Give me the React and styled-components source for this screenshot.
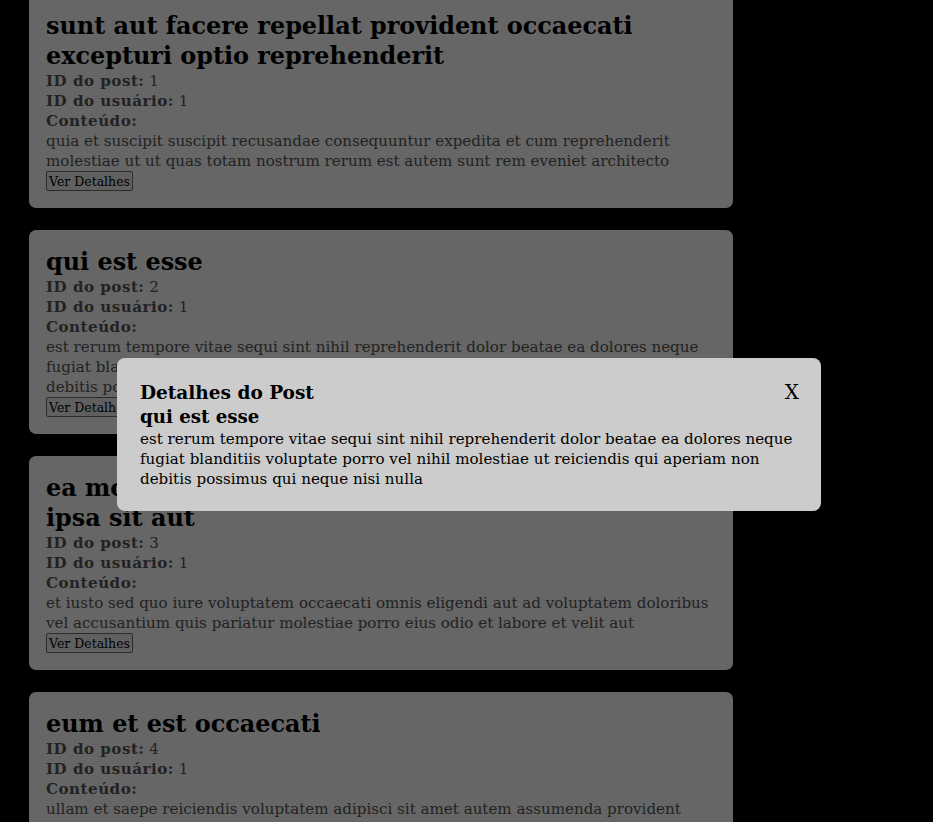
import styled, { createGlobalStyle } from "styled-components";
import { useState } from "react";

const posts = [
  {
    id: 1,
    userId: 1,
    title: "sunt aut facere repellat provident occaecati excepturi optio reprehenderit",
    body: "quia et suscipit suscipit recusandae consequuntur expedita et cum reprehenderit molestiae ut ut quas totam nostrum rerum est autem sunt rem eveniet architecto",
  },
  {
    id: 2,
    userId: 1,
    title: "qui est esse",
    body: "est rerum tempore vitae sequi sint nihil reprehenderit dolor beatae ea dolores neque fugiat blanditiis voluptate porro vel nihil molestiae ut reiciendis qui aperiam non debitis possimus qui neque nisi nulla",
  },
  {
    id: 3,
    userId: 1,
    title: "ea molestias quasi exercitationem repellat qui ipsa sit aut",
    body: "et iusto sed quo iure voluptatem occaecati omnis eligendi aut ad voluptatem doloribus vel accusantium quis pariatur molestiae porro eius odio et labore et velit aut",
  },
  {
    id: 4,
    userId: 1,
    title: "eum et est occaecati",
    body: "ullam et saepe reiciendis voluptatem adipisci sit amet autem assumenda provident rerum culpa quis hic commodi nesciunt rem tenetur doloremque ipsam iure quis sunt voluptatem rerum illo velit",
  },
];

const App = () => {
  const [selected, setSelected] = useState(posts[1]);

  return (
    <>
      <GlobalStyle />
      <Page>
        <List>
          {posts.map((post) => (
            <Card key={post.id}>
              <Title>{post.title}</Title>
              <Line>
                <Label>ID do post:</Label> {post.id}
              </Line>
              <Line>
                <Label>ID do usuário:</Label> {post.userId}
              </Line>
              <Line>
                <Label>Conteúdo:</Label>
              </Line>
              <Line>{post.body}</Line>
              <Button onClick={() => setSelected(post)}>Ver Detalhes</Button>
            </Card>
          ))}
        </List>
      </Page>
      {selected && (
        <Modal>
          <ModalHeader>
            <ModalTitle>Detalhes do Post</ModalTitle>
            <Close onClick={() => setSelected(null)}>X</Close>
          </ModalHeader>
          <ModalSubtitle>{selected.title}</ModalSubtitle>
          <ModalText>{selected.body}</ModalText>
        </Modal>
      )}
    </>
  );
};

const GlobalStyle = createGlobalStyle`
  body {
    margin: 0;
    background: #000;
    font-family: "DejaVu Serif", serif;
    overflow: hidden;
  }
`;

const Page = styled.div`
  padding-left: 29px;
`;

const List = styled.div`
  display: flex;
  flex-direction: column;
  gap: 22px;
  width: 704px;
  margin-top: -6px;
`;

const Card = styled.div`
  background: #666666;
  border-radius: 7px;
  padding: 17px;
  color: #222;
`;

const Title = styled.h2`
  margin: 0;
  font-size: 23.9px;
  line-height: 30px;
  color: #000;
`;

const Line = styled.p`
  margin: 0;
  font-size: 15.1px;
  line-height: 20px;
`;

const Label = styled.strong`
  font-weight: bold;
  letter-spacing: 0.5px;
`;

const Button = styled.button`
  display: block;
  height: 20px;
  font-family: "DejaVu Serif", serif;
  font-size: 12.5px;
  line-height: 15px;
  padding: 0 2px;
  background: #606060;
  color: #000;
  border: 1px solid #2c2c2c;
  border-radius: 2px;
`;

const Modal = styled.div`
  position: fixed;
  top: 358px;
  left: 117px;
  width: 704px;
  box-sizing: border-box;
  padding: 22px 22px 22px 23px;
  background: #cccccc;
  border-radius: 8px;
  color: #000;
`;

const ModalHeader = styled.div`
  display: flex;
  justify-content: space-between;
  align-items: center;
`;

const ModalTitle = styled.h2`
  margin: 0;
  font-size: 18.5px;
  line-height: 25px;
`;

const Close = styled.button`
  border: none;
  background: none;
  padding: 0;
  font-family: "DejaVu Serif", serif;
  font-size: 20px;
  line-height: 25px;
  color: #000;
`;

const ModalSubtitle = styled.h3`
  margin: 0;
  font-size: 18.2px;
  line-height: 24px;
`;

const ModalText = styled.p`
  margin: 0;
  font-size: 15.1px;
  line-height: 20px;
`;

export default App;
